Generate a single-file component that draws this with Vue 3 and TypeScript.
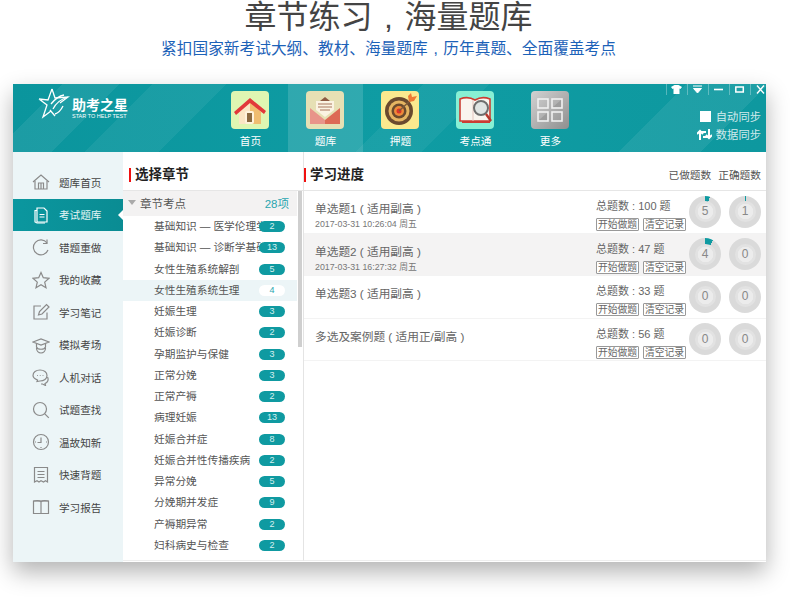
<template>
  <div class="page">
    <h1 class="title">章节练习 , 海量题库</h1>
    <p class="subtitle">紧扣国家新考试大纲、教材、海量题库 , 历年真题、全面覆盖考点</p>

    <div class="window">
      <header class="top">
        <div class="logo">
          <svg width="32" height="31" viewBox="0 0 32 31" fill="none" stroke="#fff" stroke-width="1.3">
            <path d="M14 1l3 9 13-1-8 6M1 11l9 1 4-11M1 11l8 6-4 12 8-6" />
            <path d="M15 21c3-6 8-10 15-12M13 16c4-5 8-8 13-9M17 26c4-1 6-4 8-8M12 22l5 6" />
          </svg>
          <div class="logo-text">
            <div class="logo-name">助考之星</div>
            <div class="logo-en">STAR TO HELP TEST</div>
          </div>
        </div>

        <nav class="nav">
          <div v-for="item in navItems" :key="item.key" class="nav-item" :class="{ on: item.key === 'bank' }">
            <div class="nav-icon" :class="item.key">
              <svg v-if="item.key === 'home'" viewBox="0 0 38 38" width="38" height="38">
                <path d="M8 21l11-10 11 10v12H8z" fill="#fbe6c4" />
                <path d="M19 11l11 10v12H19z" fill="#f0bd70" />
                <rect x="14" y="20" width="9" height="13" rx="2" fill="#fff3dc" />
                <rect x="16" y="22" width="5" height="9" fill="#8b6a40" />
                <path d="M3 21L19 7l16 13-2 3L19 12 5 24z" fill="#e2383a" />
              </svg>
              <svg v-else-if="item.key === 'bank'" viewBox="0 0 38 38" width="38" height="38">
                <path d="M10 19V10h18v9l-9 7z" fill="#fbf3e2" />
                <path d="M14 10l5-4 5 4z" fill="#8e5a42" />
                <path d="M12 13h14M12 16h14M14 19h10" stroke="#a9785f" stroke-width="1.200" />
                <path d="M4 17l15 12V33H4z" fill="#e8948a" />
                <path d="M34 17L19 29V33h15z" fill="#dd6a55" />
              </svg>
              <svg v-else-if="item.key === 'target'" viewBox="0 0 38 38" width="38" height="38">
                <circle cx="18" cy="20" r="14" fill="#6a4a2e" />
                <circle cx="18" cy="20" r="10.500" fill="#e5b562" />
                <circle cx="18" cy="20" r="7.500" fill="#6a4a2e" />
                <circle cx="18" cy="20" r="5" fill="#ee8a3a" />
                <circle cx="18" cy="20" r="2.500" fill="#d8352a" />
                <path d="M18 20L31 8" stroke="#7d5a3a" stroke-width="1.400" />
                <path d="M27 5l3-3 1 4 5-1-3 5-5 1z" fill="#ee7b35" />
              </svg>
              <svg v-else-if="item.key === 'point'" viewBox="0 0 38 38" width="38" height="38">
                <path d="M4 8c5-2 10-2 15 1 5-3 10-3 15-1v22H4z" fill="#f9f4ee" stroke="#cb3d33" stroke-width="1.600" />
                <path d="M17 9v21" stroke="#e5c6c0" />
                <path d="M6 31h28" stroke="#cb3d33" stroke-width="2" />
                <circle cx="25" cy="17" r="7" fill="#dfe4e3" stroke="#6e6e6e" stroke-width="2" />
                <path d="M30 23l5 7" stroke="#b5372d" stroke-width="2.400" />
              </svg>
              <svg v-else viewBox="0 0 38 38" width="38" height="38">
                <g fill="none" stroke="#f1f1f1" stroke-width="1.600">
                  <rect x="7" y="8" width="10" height="9" />
                  <rect x="21" y="8" width="10" height="9" />
                  <rect x="7" y="21" width="10" height="9" />
                  <rect x="21" y="21" width="10" height="9" />
                </g>
                <path d="M30 9v7h-8zM16 22v7H8z" fill="#9d9d9d" />
              </svg>
            </div>
            <span class="nav-label">{{ item.label }}</span>
          </div>
        </nav>

        <div class="top-right">
          <div class="win-btns">
            <span class="win-btn"><svg width="11" height="9" viewBox="0 0 11 9"><path d="M3.500 0L0 2l1.500 2 1-.5V9h6V3.500l1 .5L11 2 7.500 0h-4z" fill="#fff" /></svg></span>
            <span class="win-btn"><svg width="11" height="9" viewBox="0 0 11 9"><path d="M1 1h9M1.500 3.500h8L5.500 8z" fill="#fff" stroke="#fff" /></svg></span>
            <span class="win-btn"><svg width="11" height="9" viewBox="0 0 11 9"><path d="M1 4.500h9" stroke="#fff" stroke-width="1.600" /></svg></span>
            <span class="win-btn"><svg width="11" height="9" viewBox="0 0 11 9"><rect x="1.800" y="2" width="7.500" height="5" fill="none" stroke="#fff" stroke-width="1.500" /></svg></span>
            <span class="win-btn"><svg width="11" height="9" viewBox="0 0 11 9"><path d="M2 .5l7 8M9 .5l-7 8" stroke="#fff" stroke-width="1.400" /></svg></span>
          </div>
          <div class="sync"><i class="check"></i>自动同步</div>
          <div class="sync">
            <svg class="sync-icon" width="15" height="13" viewBox="0 0 15 13" fill="none" stroke="#fff" stroke-width="2">
              <path d="M3 12V4h6M12 1v8H6" />
              <path d="M0 6l3-3 3 3M9 7l3 3 3-3" />
            </svg>数据同步
          </div>
        </div>
      </header>

      <div class="main">
        <aside class="side">
          <div v-for="(item, i) in sideItems" :key="item.label" class="side-item" :class="{ active: i === 1 }">
            <svg class="side-icon" width="18" height="18" viewBox="0 0 18 18" fill="none" stroke="currentColor" stroke-width="1.200">
              <path v-for="d in item.paths" :key="d" :d="d" />
            </svg>
            <span>{{ item.label }}</span>
          </div>
        </aside>

        <section class="chapters">
          <h2 class="heading"><span>选择章节</span></h2>
          <div class="chapter-body">
            <div class="chapter-list">
              <div class="chapter-head">
                <i class="caret"></i>
                <span>章节考点</span>
                <b>28项</b>
              </div>
              <div v-for="(row, i) in chapters" :key="row.name" class="chapter" :class="{ cur: i === 3 }">
                <span class="chapter-name">{{ row.name }}</span>
                <span class="badge">{{ row.count }}</span>
              </div>
            </div>
            <div class="scroll"><div class="thumb"></div></div>
          </div>
        </section>

        <section class="progress">
          <h2 class="heading">
            <span>学习进度</span>
            <em>已做题数</em>
            <em>正确题数</em>
          </h2>
          <div v-for="(row, i) in exams" :key="row.name" class="exam" :class="{ odd: i === 1 }">
            <div class="exam-info">
              <div class="exam-name">{{ row.name }}</div>
              <div v-if="row.date" class="exam-date">{{ row.date }}</div>
            </div>
            <div class="exam-actions">
              <div class="exam-total">总题数 : {{ row.total }} 题</div>
              <div class="exam-btns">
                <span>开始做题</span>
                <span>清空记录</span>
              </div>
            </div>
            <div class="dial" :style="dialStyle(row.done, row.total)">
              <div class="dial-in">{{ row.done }}</div>
            </div>
            <div class="dial" :style="dialStyle(row.right, row.total)">
              <div class="dial-in">{{ row.right }}</div>
            </div>
          </div>
        </section>
      </div>
    </div>
  </div>
</template>

<script setup lang="ts">
interface Exam {
  name: string
  date?: string
  total: number
  done: number
  right: number
}

const navItems = [
  { key: 'home', label: '首页' },
  { key: 'bank', label: '题库' },
  { key: 'target', label: '押题' },
  { key: 'point', label: '考点通' },
  { key: 'more', label: '更多' }
]

const sideItems = [
  { label: '题库首页', paths: ['M1 9l8-7 8 7', 'M3 8v8h12V8', 'M6.500 16v-6h5v6', 'M9 10v6'] },
  { label: '考试题库', paths: ['M5 2h7l3 3v11H5z', 'M5 4.500H3v11.500l2 1h8', 'M7.500 8.500h5M7.500 11h5'] },
  { label: '错题重做', paths: ['M15 5a7.500 7.500 0 1 0 1 7', 'M15 1.500V5.500h-4'] },
  { label: '我的收藏', paths: ['M9 1.500l2.300 5.200 5.700.6-4.300 3.800 1.300 5.600L9 13.800l-5 2.900 1.300-5.600L1 7.300l5.700-.6z'] },
  { label: '学习笔记', paths: ['M15 9.500V16H2V3h7', 'M6.500 12l1-3.500L14.500 1.500 17 4l-7 7z'] },
  { label: '模拟考场', paths: ['M1 6l8-3 8 3-8 3z', 'M4.500 8v3c1 3 8 3 9 0V8', 'M4.500 12c0 3 2 5 4.500 5s4.500-2 4.500-5'] },
  { label: '人机对话', paths: ['M8 2c4 0 7 2.300 7 5.500S12 13 8 13l-3 .5.500-1.500C3 11 1 9.500 1 7.500 1 4.300 4 2 8 2z', 'M15.500 9c1.500 3 0 5.500-2.500 6.500l.5 2-3-1.500H9', 'M5 7.500h.8M7.800 7.500h.8M10.600 7.500h.8'] },
  { label: '试题查找', paths: ['M8 1.500a6.500 6.500 0 1 0 0 13 6.500 6.500 0 0 0 0-13z', 'M12.800 12.800l4 4'] },
  { label: '温故知新', paths: ['M9 1.500a7.500 7.500 0 1 0 0 15 7.500 7.500 0 0 0 0-15z', 'M9 4.500V9.500H5.500', 'M3 9h1M14 9h1M9 14v1'] },
  { label: '快速背题', paths: ['M2.500 1.500h13V16l-2-1.200-2 1.200-2.500-1.200L7 16l-2-1.200L2.500 16z', 'M5.500 5.500h7M5.500 8.500h7M5.500 11.500h7'] },
  { label: '学习报告', paths: ['M1.500 3h15v12.500h-15z', 'M9 3.500v12', 'M1.500 3c3-.5 6-.5 7.500.5 1.500-1 4.500-1 7.500-.5'] }
]

const chapters = [
  { name: '基础知识 — 医学伦理学基础', count: 2 },
  { name: '基础知识 — 诊断学基础知识', count: 13 },
  { name: '女性生殖系统解剖', count: 5 },
  { name: '女性生殖系统生理', count: 4 },
  { name: '妊娠生理', count: 3 },
  { name: '妊娠诊断', count: 2 },
  { name: '孕期监护与保健', count: 3 },
  { name: '正常分娩', count: 3 },
  { name: '正常产褥', count: 2 },
  { name: '病理妊娠', count: 13 },
  { name: '妊娠合并症', count: 8 },
  { name: '妊娠合并性传播疾病', count: 2 },
  { name: '异常分娩', count: 5 },
  { name: '分娩期并发症', count: 9 },
  { name: '产褥期异常', count: 2 },
  { name: '妇科病史与检查', count: 2 }
]

const exams: Exam[] = [
  { name: '单选题1 ( 适用副高 )', date: '2017-03-31 10:26:04 周五', total: 100, done: 5, right: 1 },
  { name: '单选题2 ( 适用副高 )', date: '2017-03-31 16:27:32 周五', total: 47, done: 4, right: 0 },
  { name: '单选题3 ( 适用副高 )', total: 33, done: 0, right: 0 },
  { name: '多选及案例题 ( 适用正/副高 )', total: 56, done: 0, right: 0 }
]

// wedge of the dial grows clockwise from twelve o'clock
const dialStyle = (value: number, total: number) => {
  const deg = (value / total) * 360
  return { background: `conic-gradient(#0f9aa1 0 ${deg}deg, #dadada ${deg}deg 360deg)` }
}
</script>

<style>
html,
body {
  margin: 0;
  background: #fff;
}
</style>

<style scoped>
.page {
  width: 790px;
  height: 612px;
  overflow: hidden;
  font-family: "Liberation Sans", "Noto Sans CJK SC", sans-serif;
  color: #555;
}

.title {
  margin: 0;
  height: 36px;
  padding-right: 13px;
  line-height: 34px;
  font-size: 32px;
  font-weight: 400;
  word-spacing: 0.08em;
  color: #444;
  text-align: center;
}

.subtitle {
  margin: 1px 0 0;
  height: 24px;
  padding-right: 13px;
  line-height: 24px;
  font-size: 15.700px;
  word-spacing: 0.08em;
  color: #1c62b8;
  text-align: center;
}

.window {
  width: 753px;
  height: 478px;
  margin: 23px 0 0 13px;
  background: #fff;
  box-shadow: 0 10px 22px rgba(0, 0, 0, 0.3);
}

.top {
  display: flex;
  height: 68px;
  overflow: hidden;
  color: #fff;
  background:
    linear-gradient(135deg, transparent 6%, rgba(255, 255, 255, 0.07) 6%, rgba(255, 255, 255, 0.07) 13%, transparent 13%),
    linear-gradient(135deg, transparent 17%, rgba(255, 255, 255, 0.06) 17%, rgba(255, 255, 255, 0.06) 26%, transparent 26%),
    linear-gradient(135deg, transparent 50%, rgba(255, 255, 255, 0.05) 50%, rgba(255, 255, 255, 0.05) 58%, transparent 58%),
    linear-gradient(135deg, transparent 82%, rgba(255, 255, 255, 0.07) 82%, rgba(255, 255, 255, 0.07) 92%, transparent 92%),
    linear-gradient(90deg, #0b959d, #0f9ca3 50%, #0e989f);
}

.logo {
  width: 200px;
  display: flex;
  gap: 2px;
  padding: 4px 0 0 25px;
  box-sizing: border-box;
}

.logo-text {
  padding-top: 10px;
}

.logo-name {
  font-size: 14px;
  line-height: 14px;
  font-weight: 700;
}

.logo-en {
  font-size: 5.500px;
  line-height: 8px;
  white-space: nowrap;
}

.nav {
  display: flex;
}

.nav-item {
  width: 75px;
  padding-top: 7px;
  display: flex;
  flex-direction: column;
  align-items: center;
  box-sizing: border-box;
}

.nav-item.on {
  background: rgba(255, 255, 255, 0.14);
}

.nav-icon {
  width: 38px;
  height: 38px;
  margin-right: 2px;
  border-radius: 4px;
  overflow: hidden;
}

.nav-icon svg {
  display: block;
}

.nav-icon.home {
  background: #dff6b2;
}

.nav-icon.bank {
  background: #e6e0b4;
}

.nav-icon.target {
  background: #fbe98e;
}

.nav-icon.point {
  background: #88f0d4;
}

.nav-icon.more {
  background: linear-gradient(135deg, #d2d2d2, #8f8f8f);
}

.nav-label {
  margin-top: 5px;
  font-size: 10.700px;
  line-height: 14px;
}

.top-right {
  margin-left: auto;
  width: 100px;
  display: flex;
  flex-direction: column;
  align-items: flex-end;
}

.win-btns {
  display: flex;
  flex: none;
  height: 11px;
  margin: 0 -5px 12px 0;
}

.win-btn {
  width: 21px;
  height: 11px;
  box-sizing: border-box;
  padding-left: 4px;
  border-left: 1px solid rgba(255, 255, 255, 0.3);
}

.win-btn svg {
  display: block;
  margin-top: 1px;
}

.sync {
  display: flex;
  align-items: center;
  height: 18px;
  padding-right: 5px;
  font-size: 11.300px;
  color: rgba(255, 255, 255, 0.82);
}

.check {
  width: 11px;
  height: 11px;
  margin-right: 5px;
  background: #fff;
}

.sync-icon {
  margin-right: 4px;
}

.main {
  display: flex;
  height: 410px;
}

.side {
  width: 110px;
  flex: none;
  padding-top: 14px;
  box-sizing: border-box;
  background: #ecf5f7;
}

.side-item {
  position: relative;
  display: flex;
  align-items: center;
  height: 32.500px;
  padding-left: 19px;
  font-size: 10.600px;
  color: #444;
}

.side-icon {
  flex: none;
  margin-right: 9px;
  color: #8a8a8a;
}

.side-item.active {
  color: #e4f5f5;
  background: linear-gradient(90deg, #0b979f, #0a8c93);
}

.side-item.active .side-icon {
  color: #fff;
}

.side-item.active::after {
  content: "";
  position: absolute;
  right: 0;
  top: 11px;
  border: 5px solid transparent;
  border-right-color: #fff;
  border-left-width: 0;
}

.heading {
  display: flex;
  align-items: center;
  height: 39px;
  margin: 0;
  padding-top: 7px;
  box-sizing: border-box;
  border-bottom: 1px solid #e6e6e6;
  font-size: 13.500px;
  font-weight: 700;
  color: #222;
}

.heading span {
  padding-left: 4px;
  line-height: 14px;
  border-left: 2px solid #f01010;
}

.heading em {
  font-style: normal;
  font-weight: 400;
  font-size: 10.700px;
  color: #555;
}

.heading span + em {
  margin-left: auto;
}

.heading em + em {
  margin: 0 5px 0 7px;
}

.chapters {
  width: 180px;
  height: 408px;
  flex: none;
  border-right: 1px solid #e4e4e4;
  border-bottom: 1px solid #eee;
}

.chapters .heading {
  padding-left: 6px;
}

.chapter-body {
  display: flex;
}

.chapter-list {
  width: 174px;
  flex: none;
}

.chapter-head {
  display: flex;
  align-items: center;
  height: 25px;
  padding: 0 8px 2px 5px;
  box-sizing: border-box;
  font-size: 11.500px;
  color: #555;
  background: #f3f2f2;
}

.caret {
  margin-right: 4px;
  border: 4px solid transparent;
  border-top: 5px solid #aaa;
  border-bottom-width: 0;
}

.chapter-head b {
  margin-left: auto;
  font-weight: 400;
  font-size: 11.500px;
  color: #2aa6b0;
}

.chapter {
  position: relative;
  height: 21.270px;
  line-height: 21px;
  padding-left: 31px;
  font-size: 10.700px;
  color: #555;
}

.chapter.cur {
  background: #ecf5f7;
}

.chapter-name {
  display: block;
  width: 109px;
  overflow: hidden;
  white-space: nowrap;
}

.badge {
  position: absolute;
  right: 12px;
  top: 5px;
  width: 26px;
  height: 11px;
  border-radius: 6px;
  line-height: 11px;
  text-align: center;
  font-size: 9px;
  color: #d6f0f0;
  background: #0f9aa1;
}

.chapter.cur .badge {
  color: #2aa6b0;
  background: #fff;
}

.scroll {
  width: 6px;
  padding-left: 1px;
  box-sizing: border-box;
}

.thumb {
  width: 4px;
  height: 156px;
  background: #cfcfcf;
}

.progress {
  flex: 1;
  min-width: 0;
  height: 408px;
  border-bottom: 1px solid #eee;
}

.exam {
  display: flex;
  align-items: center;
  height: 42.500px;
  box-sizing: border-box;
  padding-left: 11px;
  border-bottom: 1px solid #f3f3f3;
}

.exam.odd {
  background: #f4f3f3;
}

.exam-info {
  width: 281px;
  flex: none;
  align-self: flex-start;
  padding-top: 10px;
  box-sizing: border-box;
}

.exam-name {
  font-size: 11.700px;
  line-height: 15px;
  color: #666;
}

.exam-date {
  font-size: 8.800px;
  line-height: 13px;
  margin-top: 2px;
  color: #777;
}

.exam-actions {
  width: 93px;
  flex: none;
  padding-top: 7px;
  box-sizing: border-box;
}

.exam-total {
  font-size: 11px;
  line-height: 15px;
  color: #666;
}

.exam-btns {
  display: flex;
  gap: 4px;
  margin-top: 4px;
}

.exam-btns span {
  width: 43px;
  height: 13px;
  box-sizing: border-box;
  border: 1px solid #999;
  border-radius: 1px;
  line-height: 11px;
  text-align: center;
  font-size: 9.800px;
  color: #666;
  background: #fff;
}

.dial {
  width: 32px;
  height: 32px;
  flex: none;
  margin-right: 8px;
  border-radius: 50%;
  display: flex;
  align-items: center;
  justify-content: center;
}

.dial-in {
  width: 21px;
  height: 21px;
  border-radius: 50%;
  background: radial-gradient(circle, #ececec 0 7.500px, #e2e2e2 8px);
  line-height: 21px;
  text-align: center;
  font-size: 12px;
  color: #888;
}
</style>
